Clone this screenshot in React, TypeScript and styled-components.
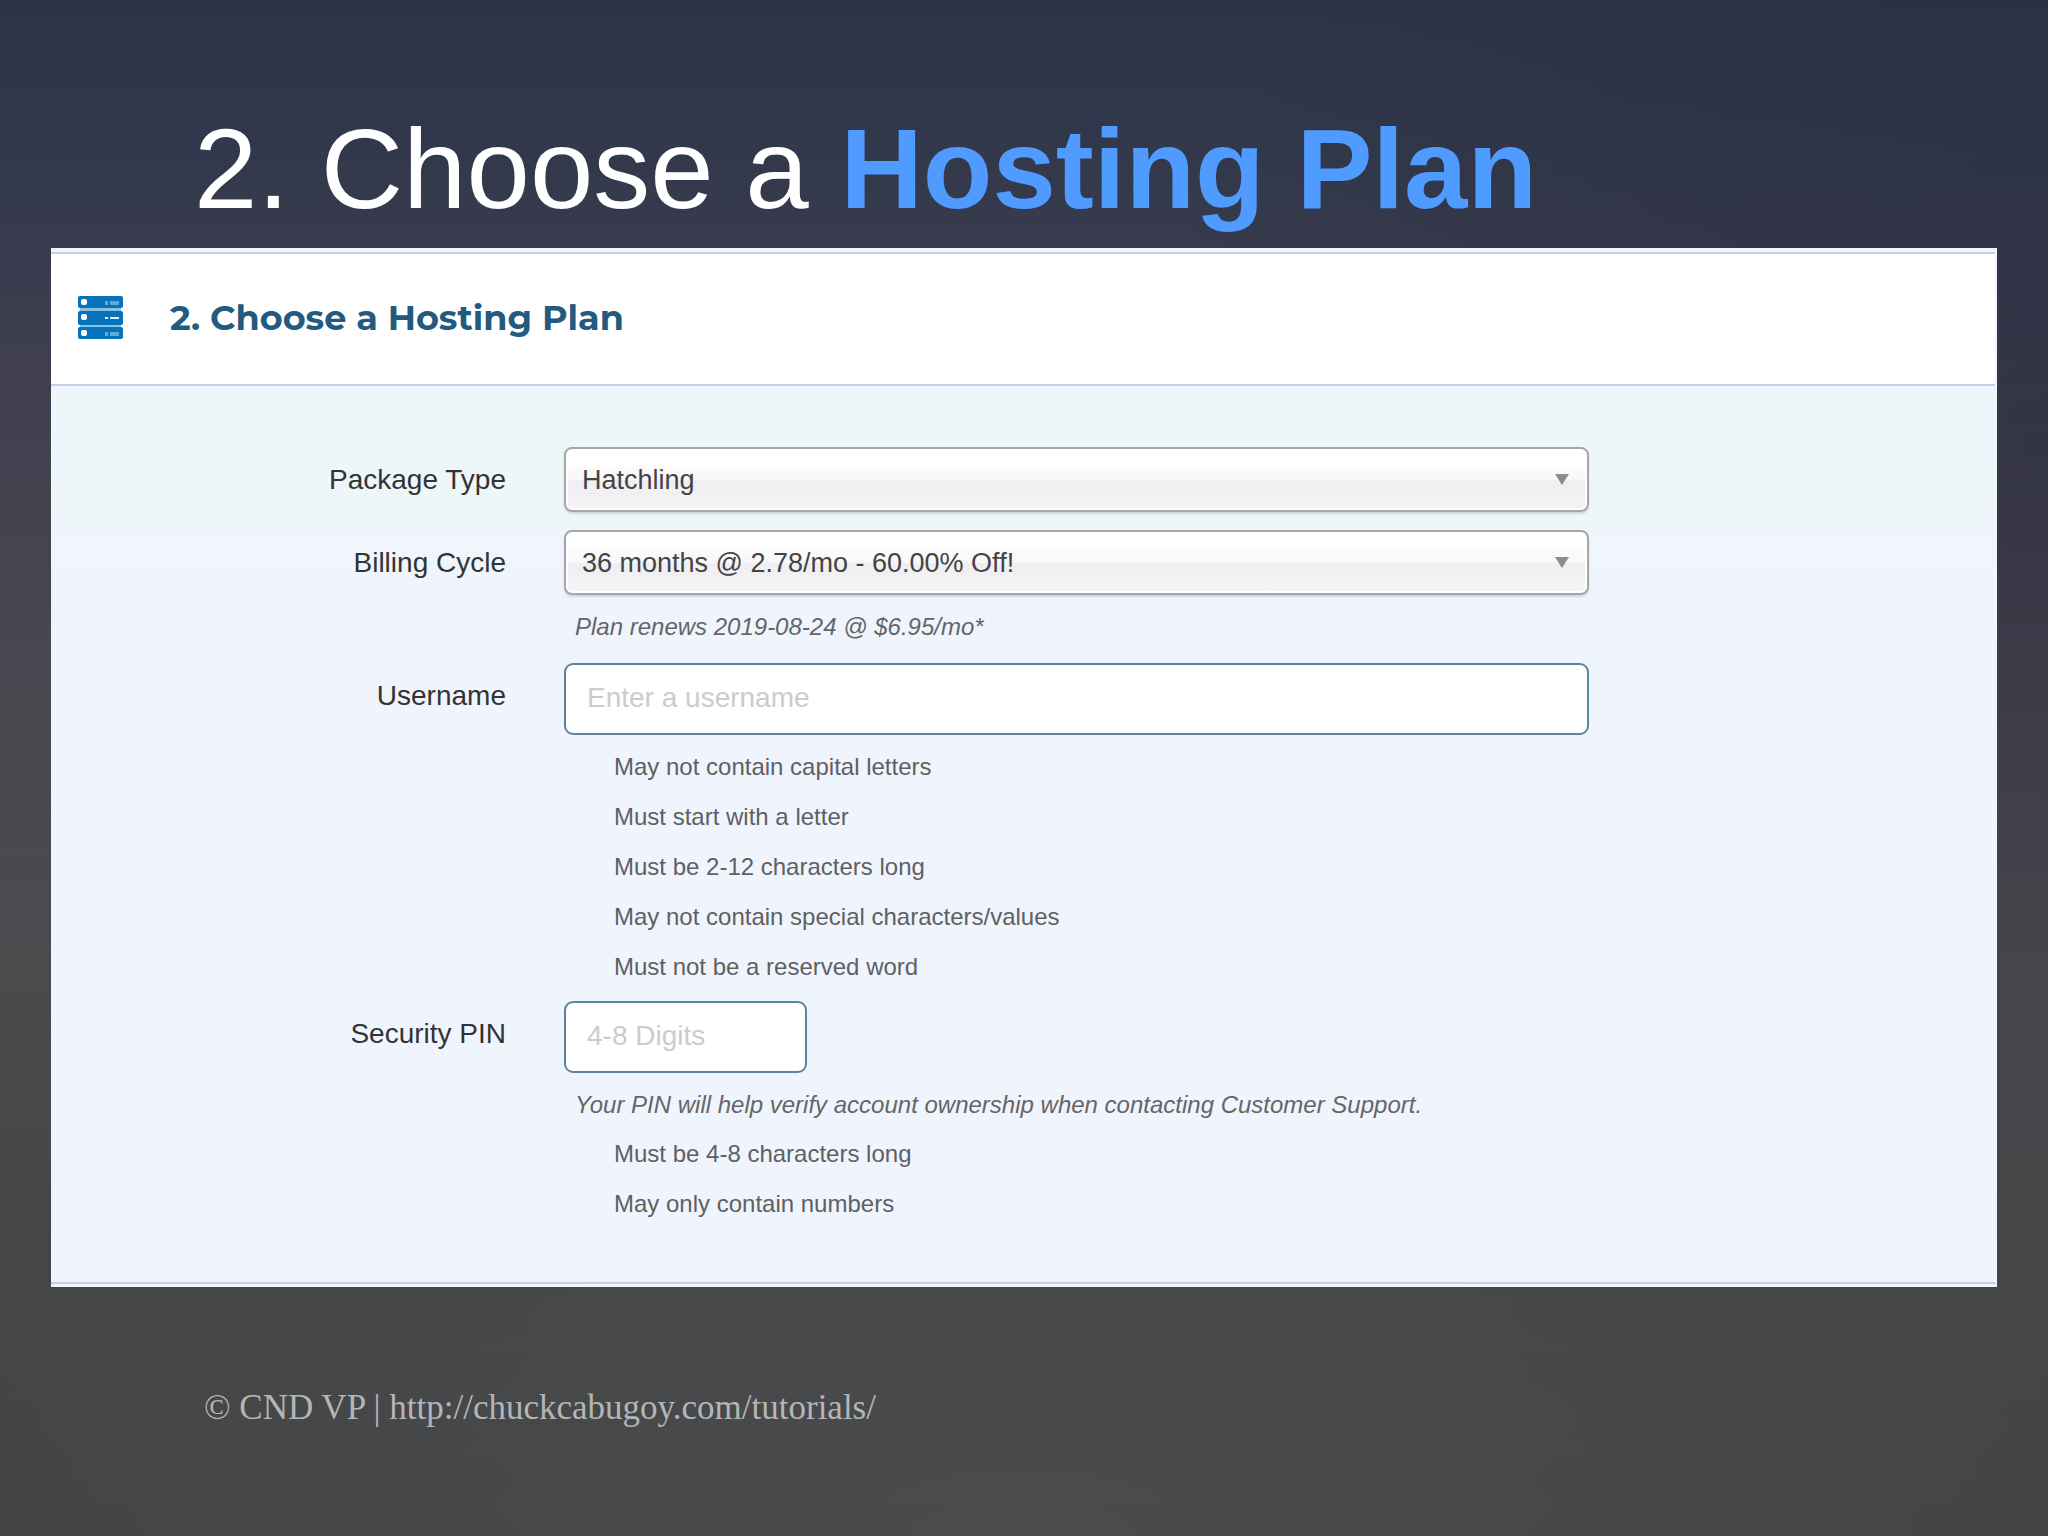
import React from 'react';
import styled, { createGlobalStyle } from 'styled-components';

const GlobalStyle = createGlobalStyle`
  *, *::before, *::after { box-sizing: border-box; }
  html, body { margin: 0; min-height: 100%; }
  body { font-family: "Liberation Sans", Arial, sans-serif; }
`;

const Slide = styled.div`
  min-height: 100vh;
  display: flex;
  flex-direction: column;
  background:
    radial-gradient(ellipse 45% 50% at 100% 30%, rgba(34, 36, 56, 0.45), rgba(34, 36, 56, 0) 100%),
    radial-gradient(ellipse 60% 30% at 50% 100%, rgba(82, 83, 85, 0.5), rgba(82, 83, 85, 0) 100%),
    linear-gradient(180deg, #2b3447 0%, #34394c 12%, #3f3f50 24%, #48464f 42%, #4b4b4e 62%, #454647 80%, #424344 100%);
`;

const SlideTitle = styled.h1`
  margin: 0;
  padding: 103px 51px 13px 194px;
  font-size: 114px;
  line-height: 132px;
  font-weight: 400;
  color: #ffffff;
`;

const Accent = styled.strong`
  font-weight: 700;
  color: #4f9bff;
`;

const Panel = styled.section`
  margin: 0 51px;
  padding: 4px 2px 3px 0;
  background: #eef6fd;
`;

const PanelHeader = styled.header`
  display: flex;
  align-items: center;
  gap: 47px;
  height: 134px;
  padding: 0 27px 2px;
  background: #ffffff;
  border-top: 2px solid #c9cee3;
  border-bottom: 2px solid #cbcce8;
`;

const PanelTitle = styled.h2`
  margin: 0;
  font-family: Montserrat, Inter, "Open Sans", sans-serif;
  font-size: 35px;
  line-height: 40px;
  font-weight: 700;
  color: #225a80;
`;

const Form = styled.form`
  display: flex;
  flex-direction: column;
  padding: 61px 0 53px;
  background: linear-gradient(180deg, #edf6f9 0, #eef6fa 120px, #f0f5fd 190px, #f0f5fd 100%);
  border-bottom: 2px solid #cbcce4;
`;

const FormRow = styled.div<{ $gap: number }>`
  display: grid;
  grid-template-columns: 455px minmax(0, 1025px);
  column-gap: 58px;
  margin-bottom: ${(p) => p.$gap}px;
`;

const Label = styled.label`
  justify-self: end;
  font-size: 28px;
  line-height: 65px;
  color: #333333;
`;

const SelectBox = styled.div`
  display: grid;
  align-items: center;
  height: 65px;

  > * { grid-area: 1 / 1; }
`;

const Select = styled.select`
  appearance: none;
  width: 100%;
  height: 65px;
  padding: 0 48px 0 16px;
  border: 2px solid #a6a6ab;
  border-radius: 8px;
  background: linear-gradient(180deg, #ffffff 20%, #f7f6f8 50%, #efeef1 52%, #f4f3f5 100%);
  box-shadow: inset 0 0 0 2px #ffffff, 0 2px 2px rgba(0, 0, 0, 0.12);
  font: 27px "Liberation Sans", Arial, sans-serif;
  color: #444444;
`;

const Arrow = styled.svg`
  justify-self: end;
  width: 14px;
  height: 11px;
  margin-right: 20px;
  pointer-events: none;
`;

const TextInput = styled.input<{ $short?: boolean }>`
  width: ${(p) => (p.$short ? '243px' : '100%')};
  height: 72px;
  padding: 0 21px 2px;
  border: 2px solid #5a84a0;
  border-radius: 9px;
  background: #ffffff;
  font: 28px "Liberation Sans", Arial, sans-serif;
  color: #444444;

  &::placeholder { color: #cccccc; opacity: 1; }
`;

const Hint = styled.p`
  margin: 0;
  padding: 8px 0 0 11px;
  font-size: 24px;
  line-height: 48px;
  font-style: italic;
  color: #666666;
`;

const Rules = styled.ul<{ $top: number }>`
  margin: 0;
  padding: ${(p) => p.$top}px 0 0 50px;
  list-style: none;
  font-size: 24px;
  line-height: 50px;
  color: #5f6062;
`;

const Footer = styled.footer`
  padding: 99px 204px;
  font-family: "Palatino Linotype", Palatino, "Liberation Serif", serif;
  font-size: 35px;
  line-height: 44px;
  color: #b4b5b6;
`;

const ServerIcon = () => (
  <svg width="45" height="44" viewBox="0 0 45 44" aria-hidden="true">
    <rect x="2" y="10" width="41" height="24" fill="#8cc0e0" />
    {[0, 15, 31].map((y, i) => (
      <g key={y}>
        <rect y={y} width="45" height={i === 1 ? 14 : 12} rx="2" fill="#0672bb" />
        <rect x="3" y={y + 3} width="6" height="6" rx="2" fill="#ffffff" />
        <path
          d={`M27 ${y + 7}h3M32 ${y + 7}h9`}
          stroke={i === 1 ? '#e4f1fa' : '#62a9d8'}
          strokeWidth={i === 1 ? 2 : 4}
        />
      </g>
    ))}
  </svg>
);

const ArrowIcon = () => (
  <Arrow viewBox="0 0 14 11" aria-hidden="true">
    <path d="M0 0h14L7 11z" fill="#8c8c8e" />
  </Arrow>
);

const usernameRules = [
  'May not contain capital letters',
  'Must start with a letter',
  'Must be 2-12 characters long',
  'May not contain special characters/values',
  'Must not be a reserved word',
];

const pinRules = ['Must be 4-8 characters long', 'May only contain numbers'];

export default function App() {
  return (
    <Slide>
      <GlobalStyle />
      <SlideTitle>
        2. Choose a <Accent>Hosting Plan</Accent>
      </SlideTitle>
      <Panel>
        <PanelHeader>
          <ServerIcon />
          <PanelTitle>2. Choose a Hosting Plan</PanelTitle>
        </PanelHeader>
        <Form>
          <FormRow $gap={18}>
            <Label htmlFor="package">Package Type</Label>
            <SelectBox>
              <Select id="package">
                <option>Hatchling</option>
              </Select>
              <ArrowIcon />
            </SelectBox>
          </FormRow>
          <FormRow $gap={12}>
            <Label htmlFor="cycle">Billing Cycle</Label>
            <div>
              <SelectBox>
                <Select id="cycle">
                  <option>36 months @ 2.78/mo - 60.00% Off!</option>
                </Select>
                <ArrowIcon />
              </SelectBox>
              <Hint>Plan renews 2019-08-24 @ $6.95/mo*</Hint>
            </div>
          </FormRow>
          <FormRow $gap={9}>
            <Label htmlFor="username">Username</Label>
            <div>
              <TextInput id="username" type="text" placeholder="Enter a username" />
              <Rules $top={7}>
                {usernameRules.map((rule) => (
                  <li key={rule}>{rule}</li>
                ))}
              </Rules>
            </div>
          </FormRow>
          <FormRow $gap={0}>
            <Label htmlFor="pin">Security PIN</Label>
            <div>
              <TextInput id="pin" type="text" placeholder="4-8 Digits" $short />
              <Hint>Your PIN will help verify account ownership when contacting Customer Support.</Hint>
              <Rules $top={0}>
                {pinRules.map((rule) => (
                  <li key={rule}>{rule}</li>
                ))}
              </Rules>
            </div>
          </FormRow>
        </Form>
      </Panel>
      <Footer>© CND VP | http://chuckcabugoy.com/tutorials/</Footer>
    </Slide>
  );
}
